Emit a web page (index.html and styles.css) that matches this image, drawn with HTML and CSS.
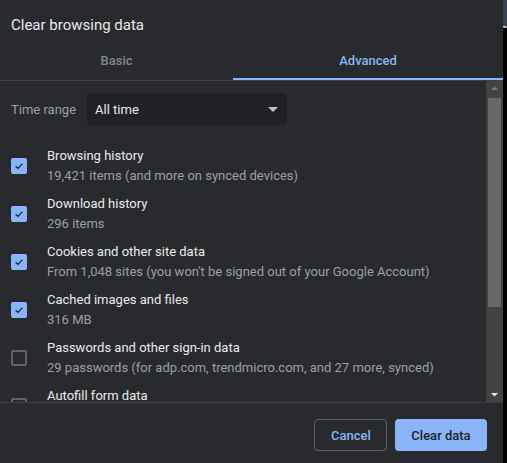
FILE: index.html
```html
<!DOCTYPE html>
<html>
<head>
<meta charset="utf-8">
<link rel="stylesheet" href="styles.css">
</head>
<body>
<div class="page">
  <div class="dialog">
    <div class="title">Clear browsing data</div>
    <div class="tabs">
      <div class="tab">Basic</div>
      <div class="tab active">Advanced</div>
    </div>
    <div class="body">
      <div class="content">
        <div class="range">
          <span class="range-label">Time range</span>
          <div class="select">
            <span>All time</span>
            <svg class="caret" width="10" height="5" viewBox="0 0 10 5"><path d="M0 0 L10 0 L5 5 Z" fill="#bdc1c6"/></svg>
          </div>
        </div>
        <div class="items">
          <div class="item">
            <span class="cb on"><svg width="16" height="16" viewBox="0 0 16 16"><path d="M4.6 8.2 L6.9 10.4 L11.3 5.9" fill="none" stroke="#202124" stroke-width="1.3"/></svg></span>
            <div class="txt"><div class="t">Browsing history</div><div class="s">19,421 items (and more on synced devices)</div></div>
          </div>
          <div class="item">
            <span class="cb on"><svg width="16" height="16" viewBox="0 0 16 16"><path d="M4.6 8.2 L6.9 10.4 L11.3 5.9" fill="none" stroke="#202124" stroke-width="1.3"/></svg></span>
            <div class="txt"><div class="t">Download history</div><div class="s">296 items</div></div>
          </div>
          <div class="item">
            <span class="cb on"><svg width="16" height="16" viewBox="0 0 16 16"><path d="M4.6 8.2 L6.9 10.4 L11.3 5.9" fill="none" stroke="#202124" stroke-width="1.3"/></svg></span>
            <div class="txt"><div class="t">Cookies and other site data</div><div class="s">From 1,048 sites (you won't be signed out of your Google Account)</div></div>
          </div>
          <div class="item">
            <span class="cb on"><svg width="16" height="16" viewBox="0 0 16 16"><path d="M4.6 8.2 L6.9 10.4 L11.3 5.9" fill="none" stroke="#202124" stroke-width="1.3"/></svg></span>
            <div class="txt"><div class="t">Cached images and files</div><div class="s">316 MB</div></div>
          </div>
          <div class="item">
            <span class="cb"></span>
            <div class="txt"><div class="t">Passwords and other sign-in data</div><div class="s">29 passwords (for adp.com, trendmicro.com, and 27 more, synced)</div></div>
          </div>
          <div class="item">
            <span class="cb"></span>
            <div class="txt"><div class="t">Autofill form data</div><div class="s">Addresses, payment methods</div></div>
          </div>
        </div>
      </div>
      <div class="scrollbar">
        <svg class="arrow" width="17" height="14" viewBox="0 0 17 14"><path d="M5 9 L12 9 L8.5 5.5 Z" fill="#7a7a7a"/></svg>
        <div class="track"><div class="thumb"></div></div>
        <svg class="arrow" width="17" height="14" viewBox="0 0 17 14"><path d="M5 5 L12 5 L8.5 8.5 Z" fill="#e8e8e8"/></svg>
      </div>
    </div>
    <div class="footer">
      <button class="btn cancel">Cancel</button>
      <button class="btn primary">Clear data</button>
    </div>
  </div>
  <div class="side">
    <div class="side-top">e</div>
  </div>
</div>
</body>
</html>
```

FILE: styles.css
```css
* { box-sizing: border-box; }
html, body { margin: 0; padding: 0; }
body {
  width: 507px;
  height: 463px;
  overflow: hidden;
  background: #000;
  font-family: Roboto, "Liberation Sans", sans-serif;
}
.page { display: flex; height: 463px; }
.dialog {
  width: 503px;
  height: 463px;
  background: #292a2d;
  display: flex;
  flex-direction: column;
}
.title {
  padding: 15px 0 0 11px;
  font-size: 15px;
  line-height: 20px;
  color: #e8eaed;
}
.tabs {
  display: flex;
  height: 46px;
  border-bottom: 1px solid #3c4043;
}
.tab {
  flex: 0 0 233px;
  display: flex;
  align-items: center;
  justify-content: center;
  padding-top: 5px;
  font-size: 13px;
  font-weight: 500;
  color: #80868b;
}
.tab.active {
  flex: 1 1 auto;
  color: #8ab4f8;
  border-bottom: 2px solid #8ab4f8;
  padding-top: 7px;
}
.body {
  height: 322px;
  display: flex;
  border-bottom: 1px solid #3c4043;
}
.content {
  flex: 1 1 auto;
  overflow: hidden;
  padding: 12px 0 0 11px;
}
.range { display: flex; align-items: center; gap: 11px; }
.range-label { font-size: 13px; color: #9aa0a6; }
.select {
  width: 200px;
  height: 32px;
  background: #202124;
  border-radius: 4px;
  display: flex;
  align-items: center;
  justify-content: space-between;
  padding: 0 9px 0 8px;
  font-size: 13px;
  color: #e8eaed;
}
.items { display: flex; flex-direction: column; gap: 8px; margin-top: 21px; }
.item { display: flex; align-items: center; height: 40px; }
.cb {
  width: 16px;
  height: 16px;
  border: 2px solid #5f6368;
  border-radius: 2px;
  flex: 0 0 16px;
  margin-right: 20px;
  display: flex;
}
.cb.on { background: #8ab4f8; border: none; }
.txt { font-size: 13px; line-height: 20px; white-space: nowrap; }
.t { color: #e8eaed; }
.s { color: #9aa0a6; }
.scrollbar {
  width: 17px;
  flex: 0 0 17px;
  background: #424242;
  display: flex;
  flex-direction: column;
}
.arrow { display: block; flex: 0 0 14px; }
.track { flex: 1 1 auto; padding: 3px 2px; }
.thumb { height: 209px; background: #686868; }
.footer {
  flex: 1 1 auto;
  display: flex;
  justify-content: flex-end;
  align-items: flex-start;
  gap: 8px;
  padding: 16px 16px 0 0;
}
.btn {
  height: 32px;
  font-family: inherit;
  font-size: 13px;
  font-weight: 500;
  border-radius: 4px;
  padding: 0 16px;
  cursor: pointer;
}
.cancel { background: transparent; border: 1px solid #5f6368; color: #8ab4f8; width: 73px; }
.primary { background: #8ab4f8; border: none; color: #202124; width: 92px; }
.side { width: 4px; background: #000; }
.side-top {
  height: 28px;
  background: #36425a;
  color: #e8eaed;
  font-size: 14px;
  overflow: hidden;
  text-indent: -3px;
  padding-top: 24px;
  line-height: 10px;
}
```
